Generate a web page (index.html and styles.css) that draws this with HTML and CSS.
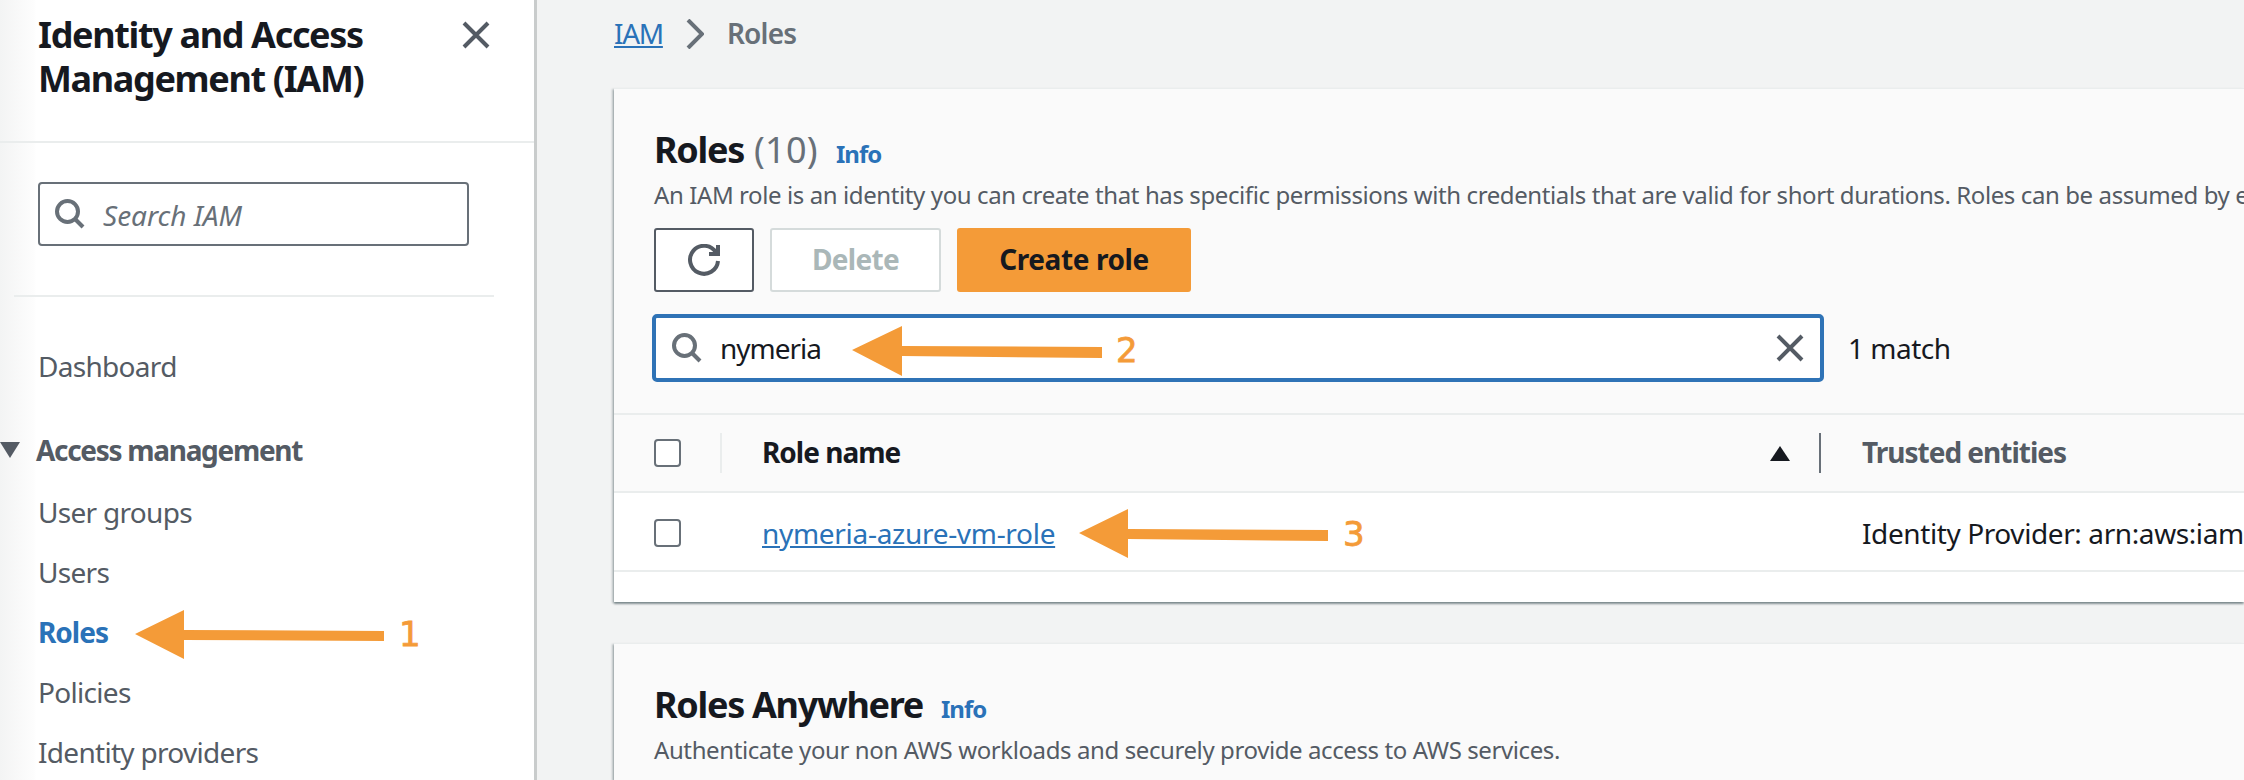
FILE: index.html
```html
<!DOCTYPE html>
<html lang="en">

<head>
    <meta charset="UTF-8">
    <title>Roles | IAM</title>
    <link rel="stylesheet" href="styles.css">
</head>

<body>
    <aside class="sidebar">
        <div class="side-head">
            <h2 class="side-title">Identity and Access Management (IAM)</h2>
            <svg class="side-close" viewBox="0 0 28 28">
                <path d="M2 2 26 26M26 2 2 26"></path>
            </svg>
        </div>

        <div class="side-search">
            <svg class="search-icon" viewBox="0 0 30 30">
                <circle cx="12.5" cy="12.5" r="10.5"></circle>
                <path d="M20 20 28 28"></path>
            </svg>
            <span class="side-search-text">Search IAM</span>
        </div>

        <div class="side-divider"></div>

        <nav class="side-nav">
            <a class="nav-item nav-top">Dashboard</a>
            <div class="nav-section">
                <span class="nav-caret"></span>
                <span>Access management</span>
            </div>
            <a class="nav-item">User groups</a>
            <a class="nav-item">Users</a>
            <a class="nav-item nav-active">Roles</a>
            <a class="nav-item">Policies</a>
            <a class="nav-item">Identity providers</a>
        </nav>
    </aside>

    <main class="content">
        <div class="crumbs">
            <a class="crumb-link">IAM</a>
            <svg class="crumb-sep" viewBox="0 0 18 30">
                <path d="M2 1 16 15 2 29"></path>
            </svg>
            <span class="crumb-current">Roles</span>
        </div>

        <section class="card">
            <div class="card-head">
                <h1 class="card-title">Roles <span class="card-count">(10)</span></h1>
                <a class="info-link">Info</a>
            </div>
            <p class="card-desc">An IAM role is an identity you can create that has specific permissions with credentials that are valid for short durations. Roles can be assumed by entities that you trust.</p>

            <div class="actions">
                <button class="btn btn-refresh">
                    <svg class="refresh-icon" viewBox="0 0 32 32">
                        <path d="M28 8.5A14 14 0 1 0 30 17"></path>
                        <path d="M30 1V10H21"></path>
                    </svg>
                </button>
                <button class="btn btn-disabled">Delete</button>
                <button class="btn btn-primary">Create role</button>
            </div>

            <div class="filter-row">
                <div class="filter">
                    <svg class="search-icon" viewBox="0 0 30 30">
                        <circle cx="12.5" cy="12.5" r="10.5"></circle>
                        <path d="M20 20 28 28"></path>
                    </svg>
                    <span class="filter-value">nymeria</span>
                    <svg class="filter-clear" viewBox="0 0 28 28">
                        <path d="M2 2 26 26M26 2 2 26"></path>
                    </svg>
                </div>
                <span class="filter-count">1 match</span>
            </div>

            <div class="table-head table-grid">
                <div class="cell-check head-check"><span class="checkbox"></span></div>
                <div class="cell-name head-name">
                    <span>Role name</span>
                    <span class="sort-up"></span>
                </div>
                <div class="cell-trust head-trust">Trusted entities</div>
            </div>
            <div class="table-row table-grid">
                <div class="cell-check"><span class="checkbox"></span></div>
                <div class="cell-name"><a class="role-link">nymeria-azure-vm-role</a></div>
                <div class="cell-trust">Identity Provider: arn:aws:iam::123456789012:oidc-provider</div>
            </div>
            <div class="table-foot"></div>
        </section>

        <section class="card card-second">
            <div class="card-head">
                <h1 class="card-title">Roles Anywhere</h1>
                <a class="info-link">Info</a>
            </div>
            <p class="card-desc">Authenticate your non AWS workloads and securely provide access to AWS services.</p>
        </section>
    </main>

    <!-- orange arrows drawn over the screenshot -->
    <svg class="notes" viewBox="0 0 2244 780">
        <polygon points="135,634 184,610 184,630 384,631 384,641 184,640 184,659"></polygon>
        <text x="399" y="646">1</text>
        <polygon points="852,350 902,326 902,346 1102,347 1102,358 902,356 902,376"></polygon>
        <text x="1116" y="362">2</text>
        <polygon points="1079,533 1128,509 1128,529 1328,530 1328,541 1128,539 1128,558"></polygon>
        <text x="1343" y="546">3</text>
    </svg>
</body>

</html>
```

FILE: styles.css
```css
* {
    box-sizing: border-box;
}

body {
    font-family: "Noto Sans", Arial, sans-serif;
    font-size: 28px;
    line-height: 40px;
    color: #16191f;
    margin: 0;
    width: 2244px;
    height: 780px;
    overflow: hidden;
    display: flex;
    position: relative;
    background-color: #f2f3f3;
}

h1,
h2,
p {
    margin: 0;
}

/* sidebar */
.sidebar {
    flex: 0 0 537px;
    height: 780px;
    background: linear-gradient(to right, #f3f4f4, #fdfdfd 34px, #fff 36px);
    border-right: 3px solid #c9cccc;
}

.side-head {
    display: flex;
    justify-content: space-between;
    height: 143px;
    padding: 13px 44px 0 38px;
    border-bottom: 2px solid #eaeded;
}

.side-title {
    font-size: 36px;
    line-height: 44px;
    font-weight: 700;
    letter-spacing: -1.35px;
    width: 400px;
    height: 88px;
}

.side-close {
    width: 28px;
    height: 28px;
    margin-top: 8px;
}

.side-close path,
.filter-clear path {
    fill: none;
    stroke: #545b64;
    stroke-width: 4;
}

.side-search {
    display: flex;
    align-items: center;
    gap: 18px;
    width: 431px;
    height: 64px;
    margin: 39px 0 0 38px;
    padding-left: 15px;
    border: 2px solid #687078;
    border-radius: 4px;
    font-style: italic;
    color: #687078;
}

.side-search-text {
    padding-top: 2px;
}

.search-icon {
    flex: none;
    width: 30px;
    height: 30px;
}

.search-icon circle,
.search-icon path {
    fill: none;
    stroke: #687078;
    stroke-width: 4;
}

.side-divider {
    height: 2px;
    margin: 49px 40px 0 14px;
    background-color: #eaeded;
}

.side-nav {
    display: flex;
    flex-direction: column;
    margin-top: 49px;
    color: #545b64;
    letter-spacing: -.7px;
}

.nav-item {
    margin: 0 0 20px 38px;
}

.nav-top {
    margin-bottom: 44px;
}

.nav-section {
    display: flex;
    align-items: center;
    gap: 16px;
    margin-bottom: 22px;
    font-weight: 700;
    letter-spacing: -1.3px;
}

.nav-caret {
    width: 0;
    height: 0;
    border-left: 10px solid transparent;
    border-right: 10px solid transparent;
    border-top: 16px solid #545b64;
}

.nav-active {
    color: #2a72b8;
    font-weight: 700;
    letter-spacing: -1px;
}

/* main column */
.content {
    flex: 1;
    min-width: 0;
    padding: 13px 0 0 77px;
}

.crumbs {
    display: flex;
    align-items: center;
    gap: 23px;
    height: 40px;
    margin-bottom: 35px;
    color: #687078;
}

.crumb-link {
    color: #2a72b8;
    letter-spacing: -1.3px;
    text-decoration: underline;
}

.crumb-sep {
    width: 18px;
    height: 30px;
    margin-top: 2px;
}

.crumb-sep path {
    fill: none;
    stroke: #687078;
    stroke-width: 4;
}

.crumb-current {
    font-weight: 600;
    letter-spacing: -.8px;
}

.card {
    background-color: #fafafa;
    height: 514px;
    padding-top: 39px;
    border-top: 1px solid #eaeded;
    box-shadow: 0 2px 2px rgba(0, 28, 36, .4), -2px 1px 2px rgba(0, 28, 36, .2);
}

.card-second {
    height: 137px;
    margin-top: 41px;
}

.card-head {
    display: flex;
    align-items: baseline;
    gap: 18px;
    padding-left: 40px;
}

.card-title {
    font-size: 36px;
    line-height: 44px;
    font-weight: 700;
    letter-spacing: -1.3px;
    white-space: nowrap;
}

.card-count {
    margin-left: 2px;
    font-weight: 400;
    color: #687078;
    letter-spacing: .3px;
}

.info-link {
    color: #2a72b8;
    font-size: 24px;
    line-height: 24px;
    font-weight: 700;
    letter-spacing: -1px;
}

.card-desc {
    margin-top: 7px;
    padding-left: 40px;
    font-size: 24px;
    line-height: 32px;
    letter-spacing: -.4px;
    color: #545b64;
    white-space: nowrap;
    overflow: hidden;
}

.actions {
    display: flex;
    gap: 16px;
    margin: 17px 0 0 40px;
}

.btn {
    height: 64px;
    font-family: inherit;
    font-size: 28px;
    font-weight: 700;
    border-radius: 3px;
    background-color: #fff;
}

.btn-refresh {
    display: flex;
    align-items: center;
    justify-content: center;
    width: 100px;
    padding: 0;
    border: 2px solid #545b64;
}

.refresh-icon {
    width: 32px;
    height: 32px;
}

.refresh-icon path {
    fill: none;
    stroke: #545b64;
    stroke-width: 4;
}

.btn-disabled {
    width: 171px;
    padding: 0 0 2px;
    border: 2px solid #d5dbdb;
    color: #aab7b8;
    letter-spacing: -.7px;
}

.btn-primary {
    width: 234px;
    padding: 0 0 2px;
    border: 0;
    background-color: #f49b38;
    color: #16191f;
    letter-spacing: -.4px;
}

.filter-row {
    display: flex;
    align-items: center;
    gap: 24px;
    margin: 22px 0 0 38px;
}

.filter {
    display: flex;
    align-items: center;
    width: 1172px;
    height: 68px;
    padding: 0 16px;
    background-color: #fff;
    border: 4px solid #2f73b6;
    border-radius: 5px;
}

.filter-value {
    flex: 1;
    margin-left: 18px;
    letter-spacing: -1px;
}

.filter-clear {
    width: 28px;
    height: 28px;
}

.filter-count {
    letter-spacing: -.5px;
}

/* role table */
.table-grid {
    display: grid;
    grid-template-columns: 108px 1099px 1fr;
    align-items: center;
}

.table-head {
    height: 80px;
    margin-top: 31px;
    border-top: 2px solid #eaeded;
    border-bottom: 2px solid #eaeded;
    font-weight: 700;
    letter-spacing: -1px;
}

.table-row {
    height: 79px;
    padding-top: 2px;
    background-color: #fff;
    border-bottom: 2px solid #eaeded;
}

.table-foot {
    height: 30px;
    background-color: #fff;
}

.cell-check {
    display: flex;
    padding-left: 40px;
}

.head-check {
    height: 40px;
    align-items: center;
    border-right: 2px solid #eaeded;
}

.checkbox {
    width: 27px;
    height: 28px;
    background-color: #fff;
    border: 2px solid #687078;
    border-radius: 4px;
}

.cell-name {
    padding-left: 40px;
}

.head-name {
    display: flex;
    align-items: center;
    justify-content: space-between;
    height: 40px;
    padding-right: 29px;
    padding-bottom: 2px;
    border-right: 2px solid #687078;
}

.sort-up {
    width: 0;
    height: 0;
    margin-top: 2px;
    border-left: 10px solid transparent;
    border-right: 10px solid transparent;
    border-bottom: 15px solid #16191f;
}

.role-link {
    color: #2a72b8;
    letter-spacing: -.3px;
    text-decoration: underline;
}

.cell-trust {
    padding-left: 41px;
    letter-spacing: -.4px;
    white-space: nowrap;
    overflow: hidden;
}

.head-trust {
    padding-bottom: 2px;
    color: #545b64;
    letter-spacing: -1px;
}

/* annotations */
.notes {
    position: absolute;
    top: 0;
    left: 0;
    width: 2244px;
    height: 780px;
}

.notes polygon {
    fill: #f49b38;
}

.notes text {
    font-family: "DejaVu Sans", sans-serif;
    font-size: 34px;
    fill: #f49b38;
    stroke: #f49b38;
    stroke-width: .8px;
}
```
